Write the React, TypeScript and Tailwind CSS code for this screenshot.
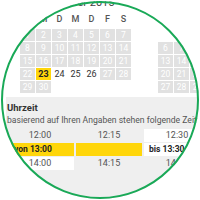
import React from 'react'

type Day = { n: number | null; state: 'off' | 'free' | 'sel' | 'none' }

const novWeeks: Day[][] = [
  [1, 2, 3, 4, 5, 6, 7],
  [8, 9, 10, 11, 12, 13, 14],
  [15, 16, 17, 18, 19, 20, 21],
  [22, 23, 24, 25, 26, 27, 28],
  [29, 30, null, null, null, null, null]
].map(row =>
  row.map(n => {
    if (n === null) return { n, state: 'none' as const }
    if (n === 23) return { n, state: 'sel' as const }
    if (n >= 24 && n <= 26) return { n, state: 'free' as const }
    return { n, state: 'off' as const }
  })
)

const decWeeks: (number | null)[][] = [
  [null, null, 1],
  [6, 7, 8],
  [13, 14, 15],
  [20, 21, 22],
  [27, 28, 29]
]

const dayNames = ['S', 'M', 'D', 'M', 'D', 'F', 'S']

const font = { fontFamily: 'Roboto, "Liberation Sans", sans-serif' }

function Cell({ day }: { day: Day }) {
  if (day.state === 'none') return <div className="w-[15px] h-[12px]" />
  const cls =
    day.state === 'sel'
      ? 'bg-[#ffd60a] text-[#222] font-bold text-[9px]'
      : day.state === 'free'
        ? 'bg-white text-[#333] text-[9px]'
        : 'bg-[#e1e1e1] text-white text-[8.5px]'
  return (
    <div className={`w-[15px] h-[12px] flex items-center justify-center leading-none ${cls}`}>
      {day.n}
    </div>
  )
}

export default function App() {
  return (
    <div className="relative w-[200px] h-[200px] bg-white overflow-hidden" style={font}>
      {/* calendar */}
      <div className="flex pl-[20px] gap-[27px] h-[97px]">
        <div className="flex flex-col w-[111px]">
          <div className="h-[13px] -mt-[4px] text-center text-[11px] text-[#444] leading-[13px]">
            November 2015
          </div>
          <div className="grid grid-cols-7 gap-x-[1px] mt-[4px] h-[12px]">
            {dayNames.map((d, i) => (
              <div key={i} className="text-center text-[9px] font-medium text-[#555] leading-[12px]">
                {d}
              </div>
            ))}
          </div>
          <div className="flex flex-col gap-[1px] mt-[4px]">
            {novWeeks.map((row, i) => (
              <div key={i} className="flex gap-[1px]">
                {row.map((d, j) => (
                  <Cell key={j} day={d} />
                ))}
              </div>
            ))}
          </div>
        </div>
        <div className="flex flex-col gap-[1px] pt-[29px]">
          {decWeeks.map((row, i) => (
            <div key={i} className="flex gap-[1px]">
              {row.map((n, j) => (
                <Cell key={j} day={{ n, state: n === null ? 'none' : 'off' }} />
              ))}
            </div>
          ))}
        </div>
      </div>

      {/* time panel */}
      <div className="ml-[6px] h-[103px] bg-[#efefef] pt-[5px] pl-[1px]">
        <div className="text-[9.5px] font-bold text-[#333] leading-[12px]">Uhrzeit</div>
        <div className="text-[8.6px] text-[#555] leading-[12px] whitespace-nowrap">
          basierend auf Ihren Angaben stehen folgende Zeitpunkte zur Verfügung
        </div>
        <div className="flex flex-col gap-[1px] mt-[3px] w-[210px] -ml-[1px]">
          <div className="grid grid-cols-[68px_66px_66px] gap-x-[2px] h-[13px] text-[9px] text-[#555] leading-[13px]">
            <div className="text-center">12:00</div>
            <div className="text-center">12:15</div>
            <div className="text-center bg-white">12:30</div>
          </div>
          <div className="grid grid-cols-[68px_66px_66px] gap-x-[2px] h-[13px] text-[8.5px] font-bold text-[#222] leading-[13px]">
            <div className="bg-[#ffd60a] pl-[8px]">von 13:00</div>
            <div className="bg-[#ffd60a]" />
            <div className="bg-white pl-[5px]">bis 13:30</div>
          </div>
          <div className="grid grid-cols-[68px_66px_66px] gap-x-[2px] h-[13px] text-[9px] text-[#555] leading-[13px]">
            <div className="text-center bg-white">14:00</div>
            <div className="text-center">14:15</div>
            <div className="text-center">14:30</div>
          </div>
        </div>
      </div>

      {/* magnifier lens */}
      <div className="absolute left-[1px] top-[1px] w-[198px] h-[198px] rounded-full border-2 border-[#19a957] shadow-[0_0_0_80px_white] pointer-events-none" />
    </div>
  )
}
